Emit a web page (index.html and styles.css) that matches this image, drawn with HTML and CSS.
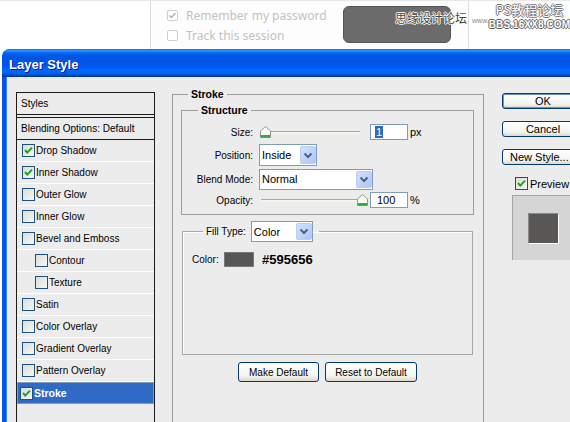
FILE: index.html
```html
<!DOCTYPE html>
<html>
<head>
<meta charset="utf-8">
<link rel="stylesheet" href="styles.css">
</head>
<body>
<header class="site">
  <div class="site-left"></div>
  <div class="site-mid">
    <div class="opts">
      <div class="opt"><span class="scb"><svg width="9" height="9" viewBox="0 0 9 9"><path d="M1.5 4.5 L3.5 6.5 L7.5 2" stroke="#b0b0b0" stroke-width="1.4" fill="none"/></svg></span>Remember my password</div>
      <div class="opt"><span class="scb"></span>Track this session</div>
    </div>
    <div class="site-btn"></div>
  </div>
  <div class="site-right"></div>
  <div class="wm">
    <span class="wm-cn">思缘设计论坛</span>
    <span class="wm-www">www.</span>
    <span class="wm-stack"><span class="wm-ps">PS教程论坛</span><span class="wm-bbs">BBS.16XX8.COM</span></span>
  </div>
</header>

<div class="dialog">
  <div class="titlebar">Layer Style</div>
  <div class="dbody">
    <div class="styles">
      <div class="styles-head">Styles</div>
      <div class="styles-list">
        <div class="blend">Blending Options: Default</div>
        <div class="item"><span class="cb"><svg width="11" height="11" viewBox="0 0 11 11"><path d="M2 5 L4.3 7.6 L9 2.6" stroke="#21a121" stroke-width="2" fill="none"/></svg></span>Drop Shadow</div>
        <div class="item"><span class="cb"><svg width="11" height="11" viewBox="0 0 11 11"><path d="M2 5 L4.3 7.6 L9 2.6" stroke="#21a121" stroke-width="2" fill="none"/></svg></span>Inner Shadow</div>
        <div class="item"><span class="cb"></span>Outer Glow</div>
        <div class="item"><span class="cb"></span>Inner Glow</div>
        <div class="item"><span class="cb"></span>Bevel and Emboss</div>
        <div class="item sub"><span class="cb"></span>Contour</div>
        <div class="item sub"><span class="cb"></span>Texture</div>
        <div class="item"><span class="cb"></span>Satin</div>
        <div class="item"><span class="cb"></span>Color Overlay</div>
        <div class="item"><span class="cb"></span>Gradient Overlay</div>
        <div class="item"><span class="cb"></span>Pattern Overlay</div>
        <div class="item sel"><span class="cb"><svg width="11" height="11" viewBox="0 0 11 11"><path d="M2 5 L4.3 7.6 L9 2.6" stroke="#21a121" stroke-width="2" fill="none"/></svg></span>Stroke</div>
      </div>
    </div>

    <div class="center">
      <fieldset class="grp stroke">
        <legend class="lg">Stroke</legend>
        <fieldset class="grp structure">
          <legend class="lg lg-struct">Structure</legend>
          <div class="row r16 first">
            <span class="lbl">Size:</span>
            <div class="slider"><span class="track"></span><span class="thumb t-start"><svg width="11" height="12" viewBox="0 0 11 12"><path d="M5.5 0.5 L10.5 5 L10.5 11.5 L0.5 11.5 L0.5 5 Z" fill="#fbfbf8" stroke="#8c9a8c"/><rect x="1" y="9" width="9" height="2.5" fill="#2fae2f"/></svg></span></div>
            <span class="inp"><span class="hl">1</span></span><span class="unit">px</span>
          </div>
          <div class="row r22">
            <span class="lbl">Position:</span>
            <span class="sel w58">Inside<span class="arr"><svg width="10" height="7" viewBox="0 0 10 7"><path d="M1.5 1.5 L5 5 L8.5 1.5" stroke="#4d6185" stroke-width="2" fill="none"/></svg></span></span>
          </div>
          <div class="row r22 tight">
            <span class="lbl">Blend Mode:</span>
            <span class="sel w114">Normal<span class="arr"><svg width="10" height="7" viewBox="0 0 10 7"><path d="M1.5 1.5 L5 5 L8.5 1.5" stroke="#4d6185" stroke-width="2" fill="none"/></svg></span></span>
          </div>
          <div class="row r16 tight">
            <span class="lbl">Opacity:</span>
            <div class="slider"><span class="track"></span><span class="thumb t-end"><svg width="11" height="12" viewBox="0 0 11 12"><path d="M5.5 0.5 L10.5 5 L10.5 11.5 L0.5 11.5 L0.5 5 Z" fill="#fbfbf8" stroke="#8c9a8c"/><rect x="1" y="9" width="9" height="2.5" fill="#2fae2f"/></svg></span></div>
            <span class="inp pad">100</span><span class="unit">%</span>
          </div>
        </fieldset>

        <fieldset class="grp fill">
          <legend class="lg lg-fill"><span class="lg-flex"><span>Fill Type:</span><span class="sel w62">Color<span class="arr"><svg width="10" height="7" viewBox="0 0 10 7"><path d="M1.5 1.5 L5 5 L8.5 1.5" stroke="#4d6185" stroke-width="2" fill="none"/></svg></span></span></span></legend>
          <div class="fill-body">
            <div class="color-row"><span class="clbl">Color:</span><span class="swatch"></span><span class="hex">#595656</span></div>
          </div>
        </fieldset>

        <div class="btns">
          <span class="btn w81">Make Default</span>
          <span class="btn w92">Reset to Default</span>
        </div>
      </fieldset>
    </div>

    <div class="side">
      <span class="btn big ok">OK</span>
      <span class="btn big">Cancel</span>
      <span class="btn big left">New Style...</span>
      <div class="prev-row"><span class="cb"><svg width="11" height="11" viewBox="0 0 11 11"><path d="M2 5 L4.3 7.6 L9 2.6" stroke="#21a121" stroke-width="2" fill="none"/></svg></span><span class="prev-txt">Preview</span></div>
      <div class="prev-box"><div class="prev-sq"></div></div>
    </div>
  </div>
</div>
</body>
</html>
```

FILE: styles.css
```css
* { box-sizing: border-box; }
html, body { margin: 0; padding: 0; }
body {
  width: 570px;
  height: 422px;
  overflow: hidden;
  background: #fff;
  font-family: "Liberation Sans", Arial, sans-serif;
  font-size: 10px;
  color: #000;
}

/* ---- web page behind ---- */
.site {
  position: relative;
  display: grid;
  grid-template-columns: 151px 318px 1fr;
  height: 49px;
  border-top: 1px solid #e8e8e8;
}
.site-left { border-right: 1px solid #dedede; }
.site-mid {
  display: flex;
  justify-content: space-between;
  align-items: flex-start;
  padding: 0 17px 0 16px;
  border-right: 1px solid #dedede;
  background: #fdfdfd;
}
.opts { display: flex; flex-direction: column; margin-top: 4px; }
.opt {
  display: flex;
  align-items: center;
  height: 20px;
  font-family: "Noto Sans", "Open Sans", sans-serif;
  font-size: 12px;
  color: #c2c2c2;
}
.scb {
  width: 11px;
  height: 11px;
  border: 1px solid #cdcdcd;
  border-radius: 2px;
  margin-right: 8px;
  display: inline-flex;
  align-items: center;
  justify-content: center;
  background: #fff;
}
.site-btn {
  width: 108px;
  height: 37px;
  margin-top: 5px;
  background: #6b6b6b;
  border: 1px solid #555;
  border-radius: 6px;
}
.wm {
  position: absolute;
  left: 395px;
  top: 1px;
  display: flex;
  align-items: center;
  white-space: nowrap;
  font-family: "Noto Sans CJK SC", "Liberation Sans", sans-serif;
}
.wm-cn {
  font-size: 12px;
  line-height: 16px;
  margin-top: 4px;
  color: #444;
  text-shadow: 1px 0 #fff, -1px 0 #fff, 0 1px #fff, 0 -1px #fff;
}
.wm-www {
  font-family: "Liberation Sans", sans-serif;
  font-size: 7px;
  color: #888;
  margin-left: 5px;
  margin-top: 8px;
}
.wm-stack {
  display: flex;
  flex-direction: column;
  align-items: center;
  margin-left: 0;
  line-height: 1;
}
.wm-ps {
  font-size: 13px;
  line-height: 16px;
  color: #fff;
  text-shadow: 1px 0 #777, -1px 0 #777, 0 1px #777, 0 -1px #777;
}
.wm-bbs {
  font-family: "Liberation Sans", sans-serif;
  font-weight: bold;
  font-size: 10px;
  line-height: 11px;
  letter-spacing: 0.1px;
  color: #fff;
  margin-top: 1px;
  text-shadow: 1px 0 #666, -1px 0 #666, 0 1px #666, 0 -1px #666;
}

/* ---- dialog ---- */
.dialog {
  margin-left: 2px;
  width: 640px;
}
.titlebar {
  height: 28px;
  border-radius: 7px 7px 0 0;
  padding: 8px 0 0 7px;
  color: #fff;
  font-weight: bold;
  font-size: 13px;
  text-shadow: 1px 1px #0a1883;
  background: linear-gradient(#0058ee 0%, #3593ff 4%, #288eff 7%, #127dff 10%, #036ffc 13%, #0262ee 17%, #0057e5 24%, #0054e3 30%, #0055eb 56%, #005bf5 66%, #026afe 76%, #0062ef 86%, #0052d6 92%, #0040ab 96%, #003092 100%);
}
.dbody {
  display: grid;
  grid-template-columns: 139px 312px 120px;
  column-gap: 17px;
  align-items: start;
  height: 345px;
  padding: 15px 0 0 10px;
  background: #ececec;
  border-left: 4px solid #0a52e6;
  box-shadow: inset 1px 0 #3a7df5;
}
.dbody > .side { margin-left: 1px; }

/* styles list */
.styles {
  border: 1px solid #1b1b1b;
  height: 340px;
}
.styles-head {
  height: 22px;
  line-height: 21px;
  padding-left: 4px;
  border-bottom: 1px solid #1b1b1b;
  margin-bottom: 2px;
}
.styles-list { border-top: 1px solid #1b1b1b; }
.blend {
  height: 22px;
  line-height: 21px;
  padding-left: 4px;
  border-bottom: 1px solid #1b1b1b;
}
.item {
  display: flex;
  align-items: center;
  height: 22px;
  padding-left: 5px;
  border-bottom: 1px solid #fff;
}
.item .cb { margin-right: 1px; }
.item.sub { padding-left: 18px; }
.item.sel {
  background: #316ac5;
  color: #fff;
  font-weight: bold;
  font-size: 10.5px;
}
.cb {
  width: 13px;
  height: 13px;
  flex: none;
  display: inline-flex;
  align-items: center;
  justify-content: center;
  border: 1px solid #1c5180;
  background: linear-gradient(135deg, #dcdcd7, #f6f6f3);
}

/* center groups */
.center { margin-top: -4px; }
.grp {
  margin: 0;
  min-width: 0;
  border: 1px solid #9d9d9d;
}
.lg {
  padding: 0 3px;
  font-weight: bold;
  font-size: 10.5px;
  line-height: 12px;
}
.stroke {
  height: 360px;
  padding: 4px 9px 0 8px;
}
.stroke > .lg { margin-left: 7px; }
.structure { padding: 8px 0 6px 0; }
.lg-struct { margin-left: 16px; }
.row { display: flex; align-items: center; }
.r16 { height: 16px; }
.r22 { height: 22px; margin-top: 4px; }
.row.tight { margin-top: 2px; }
.lbl {
  width: 71px;
  text-align: right;
  margin-right: 6px;
}
.slider {
  position: relative;
  width: 109px;
  height: 16px;
}
.track {
  position: absolute;
  left: 2px;
  right: 8px;
  top: 7px;
  height: 3px;
  border-top: 1px solid #a9a89f;
  background: #f7f5ea;
}
.thumb { position: absolute; top: 2px; display: flex; }
.t-start { left: 1px; }
.t-end { left: 98px; }
.inp {
  width: 38px;
  height: 16px;
  margin-left: 2px;
  border: 1px solid #7f9db9;
  background: #fff;
  padding-left: 4px;
  display: flex;
  align-items: center;
  font-size: 11px;
}
.inp.pad { padding-left: 6px; }
.hl { background: #316ac5; color: #fff; padding: 0 1px; line-height: 12px; }
.unit { margin-left: 2px; font-size: 11px; }
.sel {
  display: flex;
  align-items: center;
  height: 22px;
  padding-left: 2px;
  border: 1px solid #7f9db9;
  background: #fff;
  font-size: 11px;
  font-weight: normal;
}
.w58 { width: 58px; }
.w114 { width: 114px; height: 21px; }
.w62 { width: 62px; height: 21px; margin-left: 5px; }
.arr {
  margin: 1px 0 1px auto;
  width: 16px;
  height: calc(100% - 2px);
  display: flex;
  align-items: center;
  justify-content: center;
  border: 1px solid #b9cdf7;
  border-radius: 2px;
  background: linear-gradient(135deg, #d4e1fd, #aec5f6);
}
.fill {
  margin: 6px 1px 0 1px;
  padding: 0 0 0 9px;
  border-color: #a8a8a8;
  box-shadow: inset 1px 1px #fff;
}
.lg-fill {
  margin-left: 11px;
  padding: 0 6px 0 3px;
  font-weight: normal;
  font-size: 10px;
}
.lg-flex { display: flex; align-items: center; }
.fill-body { height: 112px; padding-top: 10px; }
.color-row { display: flex; align-items: center; height: 15px; }
.clbl { width: 32px; }
.swatch {
  width: 30px;
  height: 15px;
  background: #595656;
  border: 1px solid #787878;
  margin-right: 8px;
}
.hex { font-weight: bold; font-size: 13px; }
.btns {
  display: flex;
  justify-content: center;
  gap: 6px;
  margin-top: 7px;
}
.btn {
  display: flex;
  align-items: center;
  justify-content: center;
  height: 20px;
  border: 1px solid #003c74;
  border-radius: 3px;
  background: linear-gradient(#ffffff, #f4f4f0 70%, #dcd8cc);
  font-size: 10px;
  white-space: nowrap;
  overflow: hidden;
}
.w81 { width: 81px; }
.w92 { width: 92px; }

/* right side */
.side { display: flex; flex-direction: column; margin-top: 1px; }
.btn.big {
  width: 82px;
  height: 16px;
  margin-bottom: 12px;
  font-size: 11px;
}
.btn.ok { border: 1px solid #003c74; box-shadow: inset 0 0 0 1px #6d8fd6; }
.btn.left { justify-content: flex-start; padding-left: 7px; }
.prev-row {
  display: flex;
  align-items: center;
  height: 13px;
  padding-left: 13px;
  font-size: 11px;
}
.prev-txt { margin-left: 2px; }
.prev-box {
  margin: 5px 0 0 10px;
  width: 100px;
  height: 65px;
  background: #d5d5d5;
  border-left: 1px solid #a5a5a5;
  border-top: 1px solid #a5a5a5;
  padding: 17px 0 0 15px;
}
.prev-sq {
  width: 31px;
  height: 31px;
  background: #595656;
  border: 1px solid #8a8a8a;
  border-right-color: #fff;
  border-bottom-color: #fff;
}
```
